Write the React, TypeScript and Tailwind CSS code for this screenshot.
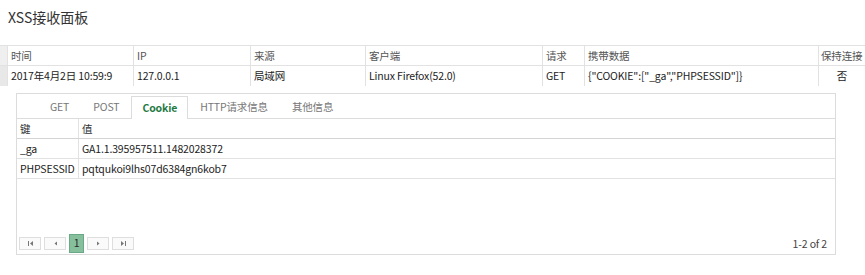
import React from "react";

const cols = [
  { w: "w-[126px]", h: "时间", d: "2017年4月2日 10:59:9" },
  { w: "w-[117px]", h: "IP", d: "127.0.0.1" },
  { w: "w-[115px]", h: "来源", d: "局域网" },
  { w: "w-[177px]", h: "客户端", d: "Linux Firefox(52.0)" },
  { w: "w-[42px]", h: "请求", d: "GET" },
  { w: "w-[234px]", h: "携带数据", d: '{"COOKIE":["_ga","PHPSESSID"]}' },
];

function First() {
  return (
    <svg width="7" height="7" viewBox="0 0 7 7">
      <rect x="1" y="1" width="1" height="5" fill="#777" />
      <path d="M6 1 L3 3.5 L6 6 Z" fill="#777" />
    </svg>
  );
}
function Prev() {
  return (
    <svg width="5" height="7" viewBox="0 0 5 7">
      <path d="M4 1.5 L1.5 3.5 L4 5.5 Z" fill="#777" />
    </svg>
  );
}
function Next() {
  return (
    <svg width="5" height="7" viewBox="0 0 5 7">
      <path d="M1 1.5 L3.5 3.5 L1 5.5 Z" fill="#777" />
    </svg>
  );
}
function Last() {
  return (
    <svg width="7" height="7" viewBox="0 0 7 7">
      <path d="M1 1 L4 3.5 L1 6 Z" fill="#777" />
      <rect x="5" y="1" width="1" height="5" fill="#777" />
    </svg>
  );
}

export default function App() {
  return (
    <div
      className="w-[865px] h-[275px] bg-white overflow-hidden text-[#333] text-[10.5px] tracking-[-0.15px]"
      style={{ fontFamily: '"Noto Sans CJK SC", "Noto Sans", sans-serif' }}
    >
      <div className="h-[45px] pl-[8px] pt-[8px] text-[14px] leading-[18px] tracking-normal text-[#333]">
        XSS接收面板
      </div>

      {/* top table */}
      <div className="flex h-[21px] border-t border-b border-[#e2e2e2] text-[#555] leading-[19px]">
        <div className="w-[8px] bg-[#efefef] border-r border-[#e2e2e2]" />
        {cols.map((c) => (
          <div key={c.h} className={`${c.w} shrink-0 border-r border-[#e2e2e2] pl-[3px]`}>
            {c.h}
          </div>
        ))}
        <div className="flex-1 pl-[2px] whitespace-nowrap">保持连接</div>
      </div>
      <div className="flex h-[20px] text-[#222] leading-[20px]">
        <div className="w-[8px] bg-[#e8e8e8] border-r border-[#e2e2e2]" />
        {cols.map((c) => (
          <div key={c.h} className={`${c.w} shrink-0 border-r border-[#e2e2e2] pl-[3px] whitespace-nowrap`}>
            {c.d}
          </div>
        ))}
        <div className="flex-1 text-center">否</div>
      </div>

      {/* panel */}
      <div className="mt-[7px] ml-[16px] w-[820px] h-[162px] border border-[#dcdcdc] flex flex-col">
        <div className="h-[25px] border-b border-[#dcdcdc] flex items-end pl-[21px] shrink-0">
          <div className="h-[22px] px-[12px] leading-[22px] text-[#777]">GET</div>
          <div className="h-[22px] px-[12px] leading-[22px] text-[#777]">POST</div>
          <div className="h-[23px] px-[10px] leading-[22px] -mb-px bg-white border border-b-0 border-[#dcdcdc] text-[#1f7a45] font-bold">
            Cookie
          </div>
          <div className="h-[22px] px-[12px] leading-[22px] text-[#777]">HTTP请求信息</div>
          <div className="h-[22px] px-[12px] leading-[22px] text-[#777]">其他信息</div>
        </div>
        <div className="flex h-[20px] border-b border-[#d4d4d4] leading-[19px] text-[#333]">
          <div className="w-[62px] border-r border-[#e2e2e2] pl-[3px]">键</div>
          <div className="flex-1 pl-[3px]">值</div>
        </div>
        <div className="flex h-[20px] border-b border-[#e2e2e2] leading-[19px] text-[#222]">
          <div className="w-[62px] border-r border-[#e2e2e2] pl-[3px]">_ga</div>
          <div className="flex-1 pl-[3px]">GA1.1.395957511.1482028372</div>
        </div>
        <div className="flex h-[20px] border-b border-[#e2e2e2] leading-[19px] text-[#222]">
          <div className="w-[62px] border-r border-[#e2e2e2] pl-[3px] whitespace-nowrap">PHPSESSID</div>
          <div className="flex-1 pl-[3px]">pqtqukoi9lhs07d6384gn6kob7</div>
        </div>
        <div className="flex-1" />
        <div className="h-[21px] flex items-center pl-[2px] pr-[8px] shrink-0">
          <div className="flex items-center gap-[3px]">
            <div className="w-[22px] h-[13px] border border-[#dedede] bg-[#fafafa] flex items-center justify-center">
              <First />
            </div>
            <div className="w-[22px] h-[13px] border border-[#dedede] bg-[#fafafa] flex items-center justify-center">
              <Prev />
            </div>
            <div className="w-[15px] h-[19px] border border-[#6aa985] bg-[#86bf9c] flex items-center justify-center text-[#2a2a2a] leading-none">
              1
            </div>
            <div className="w-[22px] h-[13px] border border-[#dedede] bg-[#fafafa] flex items-center justify-center">
              <Next />
            </div>
            <div className="w-[22px] h-[13px] border border-[#dedede] bg-[#fafafa] flex items-center justify-center">
              <Last />
            </div>
          </div>
          <div className="flex-1" />
          <div className="text-[#444]">1-2 of 2</div>
        </div>
      </div>
    </div>
  );
}
